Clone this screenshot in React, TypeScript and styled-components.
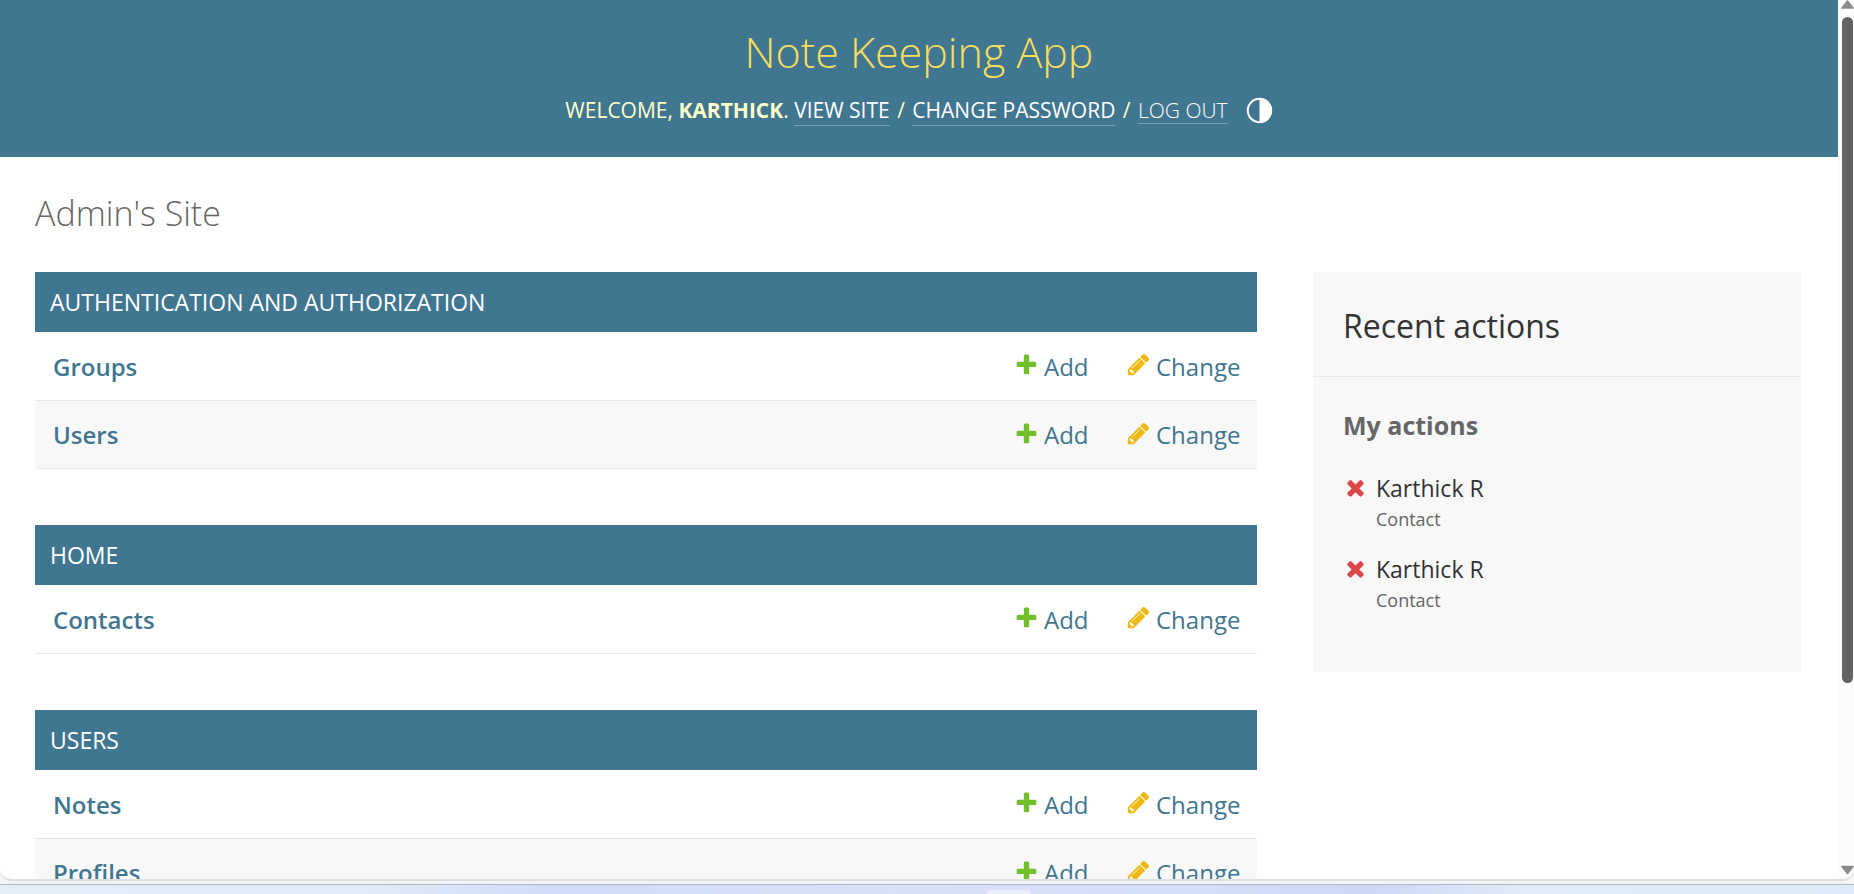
import React from "react";
import styled, { createGlobalStyle } from "styled-components";

const GlobalStyle = createGlobalStyle`
  *, *::before, *::after { box-sizing: border-box; }
  body { margin: 0; background: #ffffff; font-family: "Open Sans", "Noto Sans", sans-serif; color: #333333; }
  h1, h2, h3, p, ul { margin: 0; padding: 0; }
  a { color: #417690; text-decoration: none; }
`;

const Screen = styled.div`
  display: flex;
  flex-direction: column;
  height: 100vh;
  overflow: hidden;
  background: #f3f4f4;
`;

const Browser = styled.div`
  flex: 1;
  min-height: 0;
  display: flex;
  overflow: hidden;
  background: #ffffff;
  border-bottom: 2px solid #dfdfdf;
  border-radius: 0 0 12px 12px;
`;

const Page = styled.div`
  flex: 1;
  min-width: 0;
  overflow: hidden;
`;

const Scrollbar = styled.div`
  width: 16px;
  display: flex;
  flex-direction: column;
  align-items: flex-end;
  background: #fcfcfc;
  padding-bottom: 4px;
`;

const ScrollTrack = styled.div`
  flex: 1;
  display: flex;
  flex-direction: column;
  width: 13px;
  padding: 7px 1px 0;
`;

const ScrollThumb = styled.div`
  height: 78.5%;
  border-radius: 6px;
  background: #636363;
`;

const Desktop = styled.div`
  height: 10px;
  margin-top: 3px;
  border-top: 1px solid #aeb8c4;
  display: flex;
  justify-content: center;
  align-items: flex-end;
  padding-left: 164px;
  background: linear-gradient(90deg, #e2eef8 0%, #e0ebf8 20%, #cfdcf8 30%, #d9e1f6 48%, #d3def8 64%, #ccd8f6 74%, #dfebf8 82%, #dcebf9 100%);
`;

const TaskButton = styled.div`
  width: 44px;
  height: 4px;
  border-radius: 4px 4px 0 0;
  background: #e9eef9;
`;

const Header = styled.header`
  display: flex;
  flex-direction: column;
  align-items: center;
  height: 157px;
  padding-top: 24px;
  background: #417690;
  color: #ffffcc;
`;

const SiteName = styled.h1`
  font-size: 43px;
  line-height: 56px;
  font-weight: 300;
  color: #f5dd5d;
`;

const UserTools = styled.div`
  display: flex;
  align-items: baseline;
  margin-top: 14px;
  font-size: 21px;
  line-height: 32px;
  text-transform: uppercase;
  white-space: pre;
`;

const Separator = styled.span`
  padding: 0 2px;
`;

const ToolLink = styled.a`
  color: #ffffff;
  line-height: 30px;
  border-bottom: 1px solid #7a9fb1;
`;

const LogoutButton = styled.button`
  border: 0;
  border-bottom: 1px solid #7a9fb1;
  padding: 0;
  background: none;
  color: #ffffff;
  font: inherit;
  font-weight: 300;
  line-height: 26px;
  text-transform: uppercase;
  cursor: pointer;
`;

const ThemeButton = styled.button`
  display: flex;
  align-self: center;
  border: 0;
  padding: 0;
  margin-left: 18px;
  background: none;
  color: #ffffff;
  cursor: pointer;
`;

const Content = styled.main`
  padding: 32px 37px 0 35px;
`;

const PageTitle = styled.h2`
  font-size: 34px;
  line-height: 48px;
  font-weight: 300;
  color: #666666;
`;

const Columns = styled.div`
  display: flex;
  align-items: flex-start;
  gap: 56px;
  margin-top: 35px;
`;

const Modules = styled.div`
  flex: 1;
  min-width: 0;
  display: flex;
  flex-direction: column;
  gap: 56px;
`;

const ModuleTable = styled.table`
  width: 100%;
  border-collapse: separate;
  border-spacing: 0;
`;

const Caption = styled.caption`
  padding: 0 15px;
  background: #417690;
  color: #ffffff;
  font-size: 23px;
  line-height: 60px;
  text-align: left;
  text-transform: uppercase;
`;

const ModelRow = styled.tr`
  height: 68px;
  &:first-child { height: 69px; }
  &:nth-child(even) { background: #f8f8f8; }
`;

const ModelName = styled.th`
  padding: 1px 18px 0;
  border-bottom: 1px solid #e8e8e8;
  font-size: 24px;
  line-height: 32px;
  font-weight: 600;
  text-align: left;
`;

const ModelAction = styled.td<{ $width: number }>`
  width: ${(p) => p.$width}px;
  padding: 1px 0 0;
  border-bottom: 1px solid #e8e8e8;
  font-size: 24px;
  line-height: 32px;
`;

const ActionLink = styled.a`
  display: flex;
  align-items: center;
  gap: 5px;
`;

const RaisedIcon = styled.svg`
  width: 25px;
  height: 25px;
  flex: none;
  margin-bottom: 4px;
`;

const Sidebar = styled.aside`
  width: 488px;
  background: #f8f8f8;
`;

const SidebarTitle = styled.h2`
  padding: 32px 30px 28px;
  border-bottom: 1px solid #e8e8e8;
  font-size: 32px;
  line-height: 44px;
  font-weight: 400;
`;

const SidebarBody = styled.div`
  padding: 32px 30px 58px;
`;

const SidebarHeading = styled.h3`
  font-size: 25px;
  line-height: 32px;
  font-weight: 700;
  color: #666666;
`;

const ActionList = styled.ul`
  display: flex;
  flex-direction: column;
  gap: 20px;
  margin-top: 31px;
  list-style: none;
`;

const ActionItem = styled.li`
  display: flex;
  gap: 8px;
  & > svg { margin-top: 3px; }
`;

const ActionText = styled.div`
  font-size: 23px;
  line-height: 33px;
`;

const ActionKind = styled.div`
  font-size: 18px;
  line-height: 28px;
  color: #666666;
`;

const icons = {
  add: {
    fill: "#70bf2b",
    d: "M1600 796v192q0 40-28 68t-68 28h-416v416q0 40-28 68t-68 28h-192q-40 0-68-28t-28-68v-416h-416q-40 0-68-28t-28-68v-192q0-40 28-68t68-28h416v-416q0-40 28-68t68-28h192q40 0 68 28t28 68v416h416q40 0 68 28t28 68z",
  },
  change: {
    fill: "#efb80b",
    d: "M491 1536l91-91-235-235-91 91v107h128v128h107zm523-928q0-22-22-22-10 0-17 7l-542 542q-7 7-7 17 0 22 22 22 10 0 17-7l542-542q7-7 7-17zm-54-192l416 416-832 832h-416v-416zm683 96q0 53-37 90l-166 166-416-416 166-165q36-38 90-38 53 0 91 38l235 234q37 39 37 91z",
  },
  remove: {
    fill: "#dd4646",
    d: "M1490 1322q0 40-28 68l-136 136q-28 28-68 28t-68-28l-294-294-294 294q-28 28-68 28t-68-28l-136-136q-28-28-28-68t28-68l294-294-294-294q-28-28-28-68t28-68l136-136q28-28 68-28t68 28l294 294 294-294q28-28 68-28t68 28l136 136q28 28 28 68t-28 68l-294 294 294 294q28 28 28 68z",
  },
};

function Icon({ name }: { name: keyof typeof icons }) {
  return (
    <RaisedIcon viewBox="0 0 1792 1792" aria-hidden="true">
      <path fill={icons[name].fill} d={icons[name].d} />
    </RaisedIcon>
  );
}

function Arrow({ down }: { down?: boolean }) {
  return (
    <svg width="13" height="10" viewBox="0 0 13 10" aria-hidden="true">
      <path
        d={down ? "M1 1.500h11L6.500 8.500z" : "M1 8h11L6.500 1z"}
        fill="#8b8b8b"
        stroke="#8b8b8b"
        strokeWidth="1.500"
        strokeLinejoin="round"
      />
    </svg>
  );
}

const modules = [
  { title: "Authentication and Authorization", models: ["Groups", "Users"] },
  { title: "Home", models: ["Contacts"] },
  { title: "Users", models: ["Notes", "Profiles"] },
];

const recent = [
  { id: 1, name: "Karthick R", kind: "Contact" },
  { id: 2, name: "Karthick R", kind: "Contact" },
];

export default function App() {
  return (
    <Screen>
      <GlobalStyle />
      <Browser>
        <Page>
          <Header>
            <SiteName>Note Keeping App</SiteName>
            <UserTools>
              <span>Welcome, <strong>Karthick</strong>. </span>
              <ToolLink href="#site">View site</ToolLink>
              <Separator> / </Separator>
              <ToolLink href="#password">Change password</ToolLink>
              <Separator> / </Separator>
              <LogoutButton type="button">Log out</LogoutButton>
              <ThemeButton type="button" aria-label="Toggle theme">
                <svg width="27" height="27" viewBox="0 0 27 27" aria-hidden="true">
                  <circle cx="13.5" cy="13.5" r="11.7" fill="none" stroke="currentColor" strokeWidth="2" />
                  <path d="M13.5 1a12.5 12.5 0 0 1 0 25z" fill="currentColor" />
                </svg>
              </ThemeButton>
            </UserTools>
          </Header>
          <Content>
            <PageTitle>Admin's Site</PageTitle>
            <Columns>
              <Modules>
                {modules.map((m) => (
                  <ModuleTable key={m.title}>
                    <Caption>{m.title}</Caption>
                    <tbody>
                      {m.models.map((model) => (
                        <ModelRow key={model}>
                          <ModelName scope="row">
                            <a href={"#" + model.toLowerCase()}>{model}</a>
                          </ModelName>
                          <ModelAction $width={112}>
                            <ActionLink href="#add"><Icon name="add" />Add</ActionLink>
                          </ModelAction>
                          <ModelAction $width={131}>
                            <ActionLink href="#change"><Icon name="change" />Change</ActionLink>
                          </ModelAction>
                        </ModelRow>
                      ))}
                    </tbody>
                  </ModuleTable>
                ))}
              </Modules>
              <Sidebar>
                <SidebarTitle>Recent actions</SidebarTitle>
                <SidebarBody>
                  <SidebarHeading>My actions</SidebarHeading>
                  <ActionList>
                    {recent.map((r) => (
                      <ActionItem key={r.id}>
                        <Icon name="remove" />
                        <div>
                          <ActionText>{r.name}</ActionText>
                          <ActionKind>{r.kind}</ActionKind>
                        </div>
                      </ActionItem>
                    ))}
                  </ActionList>
                </SidebarBody>
              </Sidebar>
            </Columns>
          </Content>
        </Page>
        <Scrollbar aria-hidden="true">
          <Arrow />
          <ScrollTrack><ScrollThumb /></ScrollTrack>
          <Arrow down />
        </Scrollbar>
      </Browser>
      <Desktop><TaskButton /></Desktop>
    </Screen>
  );
}
